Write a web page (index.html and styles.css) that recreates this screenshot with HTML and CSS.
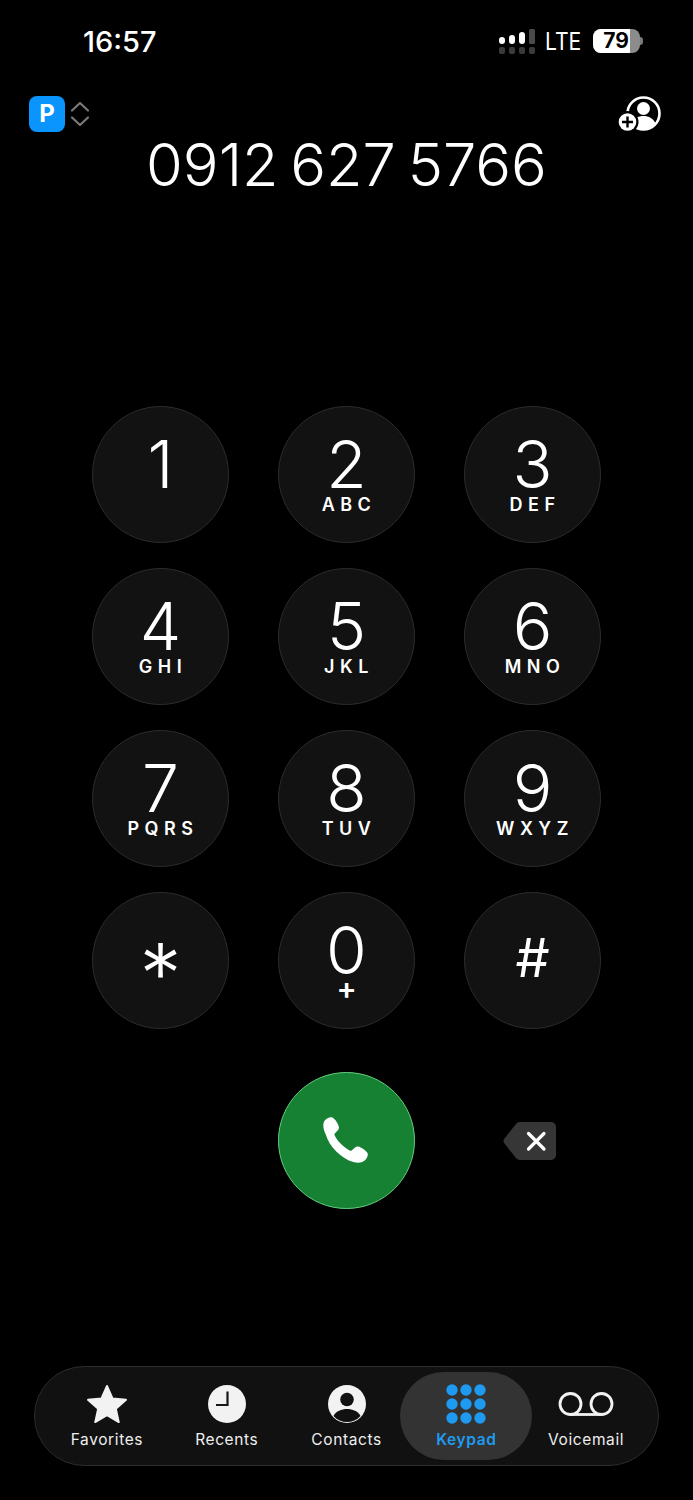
FILE: index.html
```html
<!DOCTYPE html>
<html lang="en">
<head>
  <meta charset="UTF-8">
  <meta name="viewport" content="width=device-width, initial-scale=1.0">
  <title>Keypad</title>
  <link rel="stylesheet" href="styles.css">
</head>
<body>
  <div class="status">
    <div class="time">16:57</div>
    <div class="status-right">
      <svg class="signal" width="36" height="25" viewBox="0 0 36 25">
        <g fill="#fff">
          <rect x="0" y="8" width="6" height="7" rx="3"/>
          <rect x="10" y="6" width="6" height="9" rx="3"/>
          <rect x="20" y="3" width="6" height="12" rx="3"/>
        </g>
        <rect x="30" y="0" width="6" height="15" rx="1.5" fill="#4a4a4a"/>
        <g fill="#3a3a3a">
          <rect x="0" y="18" width="6" height="7" rx="2"/>
          <rect x="10" y="18" width="6" height="7" rx="2"/>
          <rect x="20" y="18" width="6" height="7" rx="2"/>
          <rect x="30" y="18" width="6" height="7" rx="2"/>
        </g>
      </svg>
      <span class="lte">LTE</span>
      <div class="battery"><span class="battery-level">79</span></div>
    </div>
  </div>

  <div class="top-row">
    <div class="sim">
      <div class="sim-badge">P</div>
      <svg width="20" height="26" viewBox="0 0 20 26" fill="none" stroke="#7a7a7a" stroke-width="2.2" stroke-linecap="round" stroke-linejoin="round">
        <path d="M2 9.5 10 2l8 7.5"/>
        <path d="M2 16.500 10 24l8-7.500"/>
      </svg>
    </div>
    <svg class="add-contact" width="44" height="38" viewBox="0 0 44 38">
      <circle cx="25.500" cy="17.500" r="16" fill="none" stroke="#fff" stroke-width="2.600"/>
      <circle cx="25.500" cy="12.500" r="6.500" fill="#fff"/>
      <path d="M13 28.500c2-6 7.500-8.500 12.500-8.500s10.500 2.500 12.500 8.500c-3 3.500-7.500 5.500-12.500 5.500s-9.500-2-12.500-5.500z" fill="#fff"/>
      <circle cx="9.500" cy="26" r="11" fill="#000"/>
      <circle cx="9.500" cy="26" r="8.800" fill="#fff"/>
      <path d="M9.500 20.500v11M4 26h11" stroke="#000" stroke-width="2.400"/>
    </svg>
  </div>

  <div class="number">0912 627 5766</div>

  <div class="keypad">
    <div class="key"><span class="digit">1</span></div>
    <div class="key"><span class="digit">2</span><span class="letters">ABC</span></div>
    <div class="key"><span class="digit">3</span><span class="letters">DEF</span></div>
    <div class="key"><span class="digit">4</span><span class="letters">GHI</span></div>
    <div class="key"><span class="digit">5</span><span class="letters">JKL</span></div>
    <div class="key"><span class="digit">6</span><span class="letters">MNO</span></div>
    <div class="key"><span class="digit">7</span><span class="letters">PQRS</span></div>
    <div class="key"><span class="digit">8</span><span class="letters">TUV</span></div>
    <div class="key"><span class="digit">9</span><span class="letters">WXYZ</span></div>
    <div class="key"><span class="digit star">*</span></div>
    <div class="key"><span class="digit">0</span><span class="letters plus">+</span></div>
    <div class="key"><span class="digit hash">#</span></div>
  </div>

  <div class="keypad actions">
    <div class="call">
      <svg width="52" height="52" viewBox="0 0 50 50">
        <path fill="#fff" d="M3.500 5.500C5.500 3 9 1.500 11 2.500c2 1 4.500 4.500 5.800 7.500.8 1.900.5 3.400-.8 4.800l-2.500 2.700c-.6.700-.7 1.400-.3 2.200 1.700 3.200 3.700 6 6.300 8.500 2.500 2.500 5.300 4.500 8 5.900.8.400 1.500.300 2.200-.3l2.800-2.400c1.400-1.200 2.900-1.500 4.700-.7 3 1.300 6.500 3.800 7.500 5.800 1 2-.5 5.500-3 7.500-2.500 2-6.500 2.300-10.500 1.200-6-1.700-11.500-5.200-16.500-10.200-5-5-8.500-10.500-10.200-16.500C2 13.500 1.500 8 3.500 5.500z"/>
      </svg>
    </div>
    <svg class="backspace" width="54" height="40" viewBox="0 0 54 40">
      <path fill="#363636" d="M17 1h31a5 5 0 0 1 5 5v28a5 5 0 0 1-5 5H17c-1.500 0-2.800-.6-3.800-1.700L1.500 22.500a4 4 0 0 1 0-5L13.200 2.700C14.200 1.600 15.500 1 17 1z"/>
      <path d="M25.500 12.500 41 28M41 12.500 25.500 28" stroke="#fff" stroke-width="3.200" stroke-linecap="round"/>
    </svg>
  </div>

  <div class="tabbar">
    <div class="tab">
      <svg width="42" height="40" viewBox="0 0 44 42">
        <path fill="#f2f2f2" stroke="#f2f2f2" stroke-width="2" stroke-linejoin="round" d="M22 2l5.800 13.200 14.200 1.400-10.700 9.400 3.100 14L22 32.700 9.600 40l3.100-14L2 16.600l14.200-1.400z"/>
      </svg>
      <span>Favorites</span>
    </div>
    <div class="tab">
      <svg width="40" height="40" viewBox="0 0 40 40">
        <circle cx="20" cy="20" r="19" fill="#f2f2f2"/>
        <path d="M20.500 7.500v13.500H9" fill="none" stroke="#161616" stroke-width="2.200"/>
      </svg>
      <span>Recents</span>
    </div>
    <div class="tab">
      <svg width="40" height="40" viewBox="0 0 40 40">
        <circle cx="20" cy="20" r="19" fill="#f2f2f2"/>
        <circle cx="20" cy="15.500" r="6.800" fill="#111"/>
        <path d="M6.500 32c2.500-5 8-7 13.500-7s11 2 13.500 7C30 36 25 38 20 38S10 36 6.500 32z" fill="#111"/>
      </svg>
      <span>Contacts</span>
    </div>
    <div class="tab active">
      <svg width="40" height="40" viewBox="0 0 40 40" fill="#1e9bf0">
        <circle cx="6" cy="6" r="5.700"/><circle cx="20" cy="6" r="5.700"/><circle cx="34" cy="6" r="5.700"/>
        <circle cx="6" cy="20" r="5.700"/><circle cx="20" cy="20" r="5.700"/><circle cx="34" cy="20" r="5.700"/>
        <circle cx="6" cy="34" r="5.700"/><circle cx="20" cy="34" r="5.700"/><circle cx="34" cy="34" r="5.700"/>
      </svg>
      <span>Keypad</span>
    </div>
    <div class="tab">
      <svg width="56" height="40" viewBox="0 0 56 40" fill="none" stroke="#f2f2f2" stroke-width="2.800">
        <circle cx="12.500" cy="20" r="10.500"/>
        <circle cx="43.500" cy="20" r="10.500"/>
        <path d="M12.500 30.500h31"/>
      </svg>
      <span>Voicemail</span>
    </div>
  </div>
</body>
</html>
```

FILE: styles.css
```css
body {
  margin: 0;
  width: 693px;
  height: 1500px;
  background: #000;
  color: #fff;
  font-family: Inter, "Liberation Sans", sans-serif;
  overflow: hidden;
}

/* status bar */
.status {
  height: 96px;
  box-sizing: border-box;
  padding: 24px 53px 0 83px;
  display: flex;
  justify-content: space-between;
  align-items: flex-start;
}

.time {
  font-size: 29px;
  font-weight: 500;
  line-height: 36px;
}

.status-right {
  display: flex;
  align-items: center;
  height: 34px;
}

.lte {
  display: inline-block;
  width: 36px;
  margin: 0 12px 0 10px;
  font-size: 24px;
  font-weight: 400;
  white-space: nowrap;
  transform: scaleX(.88);
  transform-origin: left center;
}

.battery {
  position: relative;
  width: 47px;
  height: 24px;
  border-radius: 8px;
  background: #8c8c8c;
}

.battery::after {
  content: '';
  position: absolute;
  right: -3px;
  top: 8px;
  width: 3px;
  height: 8px;
  border-radius: 0 3px 3px 0;
  background: #7a7a7a;
}

.battery-level {
  display: block;
  box-sizing: border-box;
  width: 37px;
  height: 24px;
  padding-right: 1px;
  border-radius: 8px 0 0 8px;
  background: #fff;
  color: #000;
  font-size: 21px;
  font-weight: 700;
  line-height: 24px;
  text-align: right;
}

/* sim switch and add contact */
.top-row {
  height: 38px;
  padding: 0 31px 0 29px;
  display: flex;
  justify-content: space-between;
  align-items: flex-start;
}

.sim {
  display: flex;
  align-items: center;
  gap: 5px;
}

.sim-badge {
  width: 36px;
  height: 36px;
  border-radius: 8px;
  background: #0a94fe;
  font-size: 24px;
  font-weight: 700;
  line-height: 36px;
  text-align: center;
}

.number {
  height: 272px;
  font-size: 59.500px;
  font-weight: 300;
  line-height: 60px;
  word-spacing: -5px;
  text-align: center;
}

/* keypad */
.keypad {
  display: grid;
  grid-template-columns: repeat(3, 137px);
  grid-auto-rows: 137px;
  column-gap: 49px;
  row-gap: 25px;
  justify-content: center;
}

.key {
  box-sizing: border-box;
  border: 1px solid #2c2c2c;
  border-radius: 50%;
  background: #121212;
  display: flex;
  flex-direction: column;
  align-items: center;
  padding-top: 26px;
}

.digit {
  font-size: 66px;
  font-weight: 300;
  line-height: 62px;
}

.digit.star {
  font-size: 84px;
  margin-top: 24px;
}

.digit.hash {
  font-size: 54px;
  font-weight: 400;
  margin-top: 8px;
}

.letters {
  font-size: 18px;
  font-weight: 600;
  letter-spacing: 5.500px;
  line-height: 20px;
  padding-left: 5px;
}

.letters.plus {
  font-size: 30px;
  line-height: 14px;
  letter-spacing: 0;
  padding-left: 0;
}

.actions {
  margin-top: 43px;
}

.call {
  grid-column: 2;
  box-sizing: border-box;
  border: 1px solid #63cf7f;
  border-radius: 50%;
  background: #168033;
  display: flex;
  align-items: center;
  justify-content: center;
}

.backspace {
  grid-column: 3;
  align-self: center;
  justify-self: center;
  margin-right: 5px;
}

/* tab bar */
.tabbar {
  box-sizing: border-box;
  width: 625px;
  height: 100px;
  margin: 157px 0 0 34px;
  padding: 5px 12px;
  border: 1px solid #2c2c2c;
  border-radius: 50px;
  background: #111;
  display: flex;
  justify-content: center;
}

.tab {
  width: 120px;
  height: 88px;
  display: flex;
  flex-direction: column;
  align-items: center;
  justify-content: flex-end;
  gap: 6px;
  padding-bottom: 11px;
  box-sizing: border-box;
  font-size: 15.500px;
  font-weight: 400;
  letter-spacing: .6px;
  color: #eee;
}

.tab.active {
  width: 132px;
  margin: 0 -6px;
  border-radius: 44px;
  background: #333;
  color: #1e9bf0;
  font-weight: 600;
}

.tab svg {
  display: block;
}
```
